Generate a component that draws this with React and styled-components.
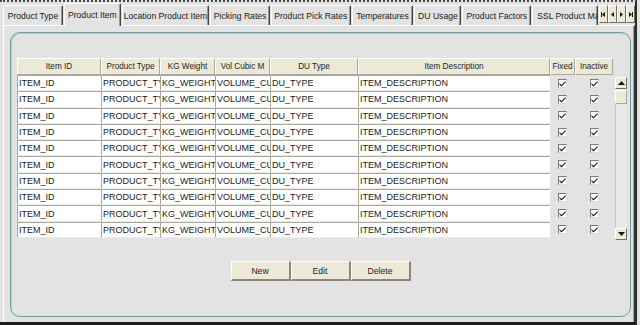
import React from 'react';
import styled, {createGlobalStyle} from 'styled-components';

const GlobalStyle = createGlobalStyle`
  html, body { margin: 0; padding: 0; background: #e3e3e3; }
  body { font-family: "Liberation Sans", Arial, sans-serif; color: #1e1e1e; }
`;

const tabs = [
    {label: 'Product Type', w: 61},
    {label: 'Product Item', w: 58, active: true},
    {label: 'Location Product Item', w: 89},
    {label: 'Picking Rates', w: 61},
    {label: 'Product Pick Rates', w: 81},
    {label: 'Temperatures', w: 63},
    {label: 'DU Usage', w: 48},
    {label: 'Product Factors', w: 70},
    {label: 'SSL Product Mapping', w: 67, clip: true},
];

const columns = [
    {title: 'Item ID', w: 84, value: 'ITEM_ID'},
    {title: 'Product Type', w: 59, value: 'PRODUCT_TYPE'},
    {title: 'KG Weight', w: 55, value: 'KG_WEIGHT'},
    {title: 'Vol Cubic M', w: 55, value: 'VOLUME_CUBIC'},
    {title: 'DU Type', w: 88, value: 'DU_TYPE'},
    {title: 'Item Description', w: 192, value: 'ITEM_DESCRIPTION'},
    {title: 'Fixed', w: 25, check: true},
    {title: 'Inactive', w: 38, check: true},
];

const rows = Array.from({length: 10}, (_, i) => i);

const Check = () => (
    <CheckBox>
        <svg width="7" height="7" viewBox="0 0 7 7">
            <path d="M0.5 3 L2.5 5 L6.5 1 L6.5 2.6 L2.5 6.6 L0.5 4.6 Z" fill="#111" />
        </svg>
    </CheckBox>
);

const Arrow = ({dir, bar}) => (
    <svg width="7" height="7" viewBox="0 0 7 7">
        {dir === 'left'
            ? <path d="M5 1 L2 3.5 L5 6 Z" fill="#111" />
            : <path d="M2 1 L5 3.5 L2 6 Z" fill="#111" />}
        {bar && <rect x={dir === 'left' ? 1 : 5} y="1" width="1" height="5" fill="#111" />}
    </svg>
);

const App = () => {
    return (
        <>
            <GlobalStyle />
            <Window>
                <TabBar>
                    {tabs.map(t => (
                        <Tab key={t.label} $w={t.w} $active={t.active} $clip={t.clip}>{t.label}</Tab>
                    ))}
                    <TabScroll>
                        <ScrollBtn><Arrow dir="left" bar /></ScrollBtn>
                        <ScrollBtn><Arrow dir="left" /></ScrollBtn>
                        <ScrollBtn><Arrow dir="right" /></ScrollBtn>
                        <ScrollBtn><Arrow dir="right" bar /></ScrollBtn>
                    </TabScroll>
                </TabBar>
                <TabPanel>
                    <Panel>
                        <TableWrap>
                            <Grid $cols={columns.map(c => c.w + 'px').join(' ')}>
                                {columns.map(c => <HeadCell key={c.title}>{c.title}</HeadCell>)}
                                {rows.map(r => columns.map(c => (
                                    c.check
                                        ? <CheckCell key={r + c.title}><Check /></CheckCell>
                                        : <Cell key={r + c.title}>{c.value}</Cell>
                                )))}
                            </Grid>
                            <VScroll>
                                <ScrollArrow>
                                    <svg width="7" height="4" viewBox="0 0 7 4"><path d="M0 4 L3.5 0 L7 4 Z" fill="#111" /></svg>
                                </ScrollArrow>
                                <Thumb />
                                <Track />
                                <ScrollArrow>
                                    <svg width="7" height="4" viewBox="0 0 7 4"><path d="M0 0 L3.5 4 L7 0 Z" fill="#111" /></svg>
                                </ScrollArrow>
                            </VScroll>
                        </TableWrap>
                        <Buttons>
                            <Button>New</Button>
                            <Button>Edit</Button>
                            <Button>Delete</Button>
                        </Buttons>
                    </Panel>
                </TabPanel>
            </Window>
        </>
    );
};

const Window = styled.div`
box-sizing: border-box;
width: 637px;
height: 325px;
padding-left: 3px;
display: flex;
flex-direction: column;
border-top: 2px dotted #4a4a4a;
border-right: 2px solid #2c2c2c;
border-bottom: 3px solid #1c1c1c;
background: #e3e3e3;
`;

const TabBar = styled.div`
display: flex;
align-items: flex-end;
height: 23px;
flex-shrink: 0;
position: relative;
z-index: 1;
`;

const Tab = styled.div`
box-sizing: border-box;
width: ${({$w}) => $w}px;
height: ${({$active}) => ($active ? '23px' : '20px')};
margin-right: 1px;
margin-bottom: ${({$active}) => ($active ? '-1px' : '0')};
padding: ${({$clip}) => ($clip ? '0 0 0 4px' : '0')};
display: flex;
align-items: center;
justify-content: ${({$clip}) => ($clip ? 'flex-start' : 'center')};
overflow: hidden;
white-space: nowrap;
font-size: 8.6px;
color: #1a1a1a;
background: #e3e3e3;
border-top: 1px solid #ffffff;
border-left: 1px solid #ffffff;
border-right: 1px solid #404040;
border-radius: 2px 2px 0 0;
box-shadow: inset -1px 0 0 #9a9a9a;
`;

const TabScroll = styled.div`
display: flex;
height: 18px;
margin-bottom: 2px;
margin-left: 0;
`;

const ScrollBtn = styled.div`
box-sizing: border-box;
width: 9px;
height: 18px;
display: flex;
align-items: center;
justify-content: center;
background: #ece9d8;
border-top: 1px solid #ffffff;
border-left: 1px solid #ffffff;
border-right: 1px solid #716f64;
border-bottom: 1px solid #716f64;
`;

const TabPanel = styled.div`
flex: 1;
display: flex;
border-top: 1px solid #ffffff;
border-left: 1px solid #ffffff;
border-right: 1px solid #404040;
box-shadow: inset -1px 0 0 #9a9a9a;
`;

const Panel = styled.div`
flex: 1;
margin: 6px 3px 5px 6px;
padding: 25px 0 0 6px;
border: 1px solid #6f9d9f;
border-radius: 10px;
box-shadow: inset 1px 1px 0 #b9d0d0;
display: flex;
flex-direction: column;
`;

const TableWrap = styled.div`
display: flex;
align-items: flex-start;
`;

const Grid = styled.div`
display: grid;
grid-template-columns: ${({$cols}) => $cols};
grid-template-rows: 17px;
grid-auto-rows: 16.3px;
row-gap: 0;
`;

const HeadCell = styled.div`
box-sizing: border-box;
display: flex;
align-items: center;
justify-content: center;
height: 17px;
margin-bottom: 2px;
font-size: 8.2px;
white-space: nowrap;
overflow: hidden;
background: #ece9d8;
border-top: 1px solid #ffffff;
border-left: 1px solid #ffffff;
border-right: 1px solid #aca899;
border-bottom: 1px solid #aca899;
`;

const Cell = styled.div`
box-sizing: border-box;
height: 16.3px;
padding: 0 0 0 1px;
display: flex;
align-items: center;
font-size: 9px;
color: #222222;
white-space: nowrap;
overflow: hidden;
background: #ffffff;
border-top: 1px solid #a8a89c;
border-left: 1px solid #a8a89c;
border-bottom: 1px solid #ecebe4;
`;

const CheckCell = styled.div`
display: flex;
align-items: center;
justify-content: center;
height: 16.3px;
`;

const CheckBox = styled.div`
box-sizing: border-box;
width: 9px;
height: 9px;
display: flex;
align-items: center;
justify-content: center;
background: #ffffff;
border-top: 1px solid #7a7a7a;
border-left: 1px solid #7a7a7a;
border-right: 1px solid #dcdcdc;
border-bottom: 1px solid #dcdcdc;
`;

const VScroll = styled.div`
box-sizing: border-box;
width: 12px;
height: 163px;
margin: 19px 0 0 2px;
display: flex;
flex-direction: column;
background: #e9e9e9;
`;

const ScrollArrow = styled.div`
box-sizing: border-box;
height: 12px;
display: flex;
align-items: center;
justify-content: center;
background: #ece9d8;
border-top: 1px solid #ffffff;
border-left: 1px solid #ffffff;
border-right: 1px solid #716f64;
border-bottom: 1px solid #716f64;
`;

const Thumb = styled.div`
box-sizing: border-box;
height: 14px;
margin-top: 1px;
background: #ece9d8;
border-top: 1px solid #ffffff;
border-left: 1px solid #ffffff;
border-right: 1px solid #aca899;
border-bottom: 1px solid #aca899;
`;

const Track = styled.div`
flex: 1;
border-left: 1px solid #c8c8c8;
`;

const Buttons = styled.div`
display: flex;
justify-content: center;
margin-top: 21px;
margin-left: -6px;
`;

const Button = styled.button`
box-sizing: border-box;
width: 60px;
height: 20px;
padding: 0;
font-family: "Liberation Sans", Arial, sans-serif;
font-size: 8.6px;
color: #1e1e1e;
background: #ece9d8;
border: none;
border-top: 1px solid #ffffff;
border-left: 1px solid #ffffff;
border-right: 2px solid #8a877a;
border-bottom: 2px solid #8a877a;
`;

export default App;
